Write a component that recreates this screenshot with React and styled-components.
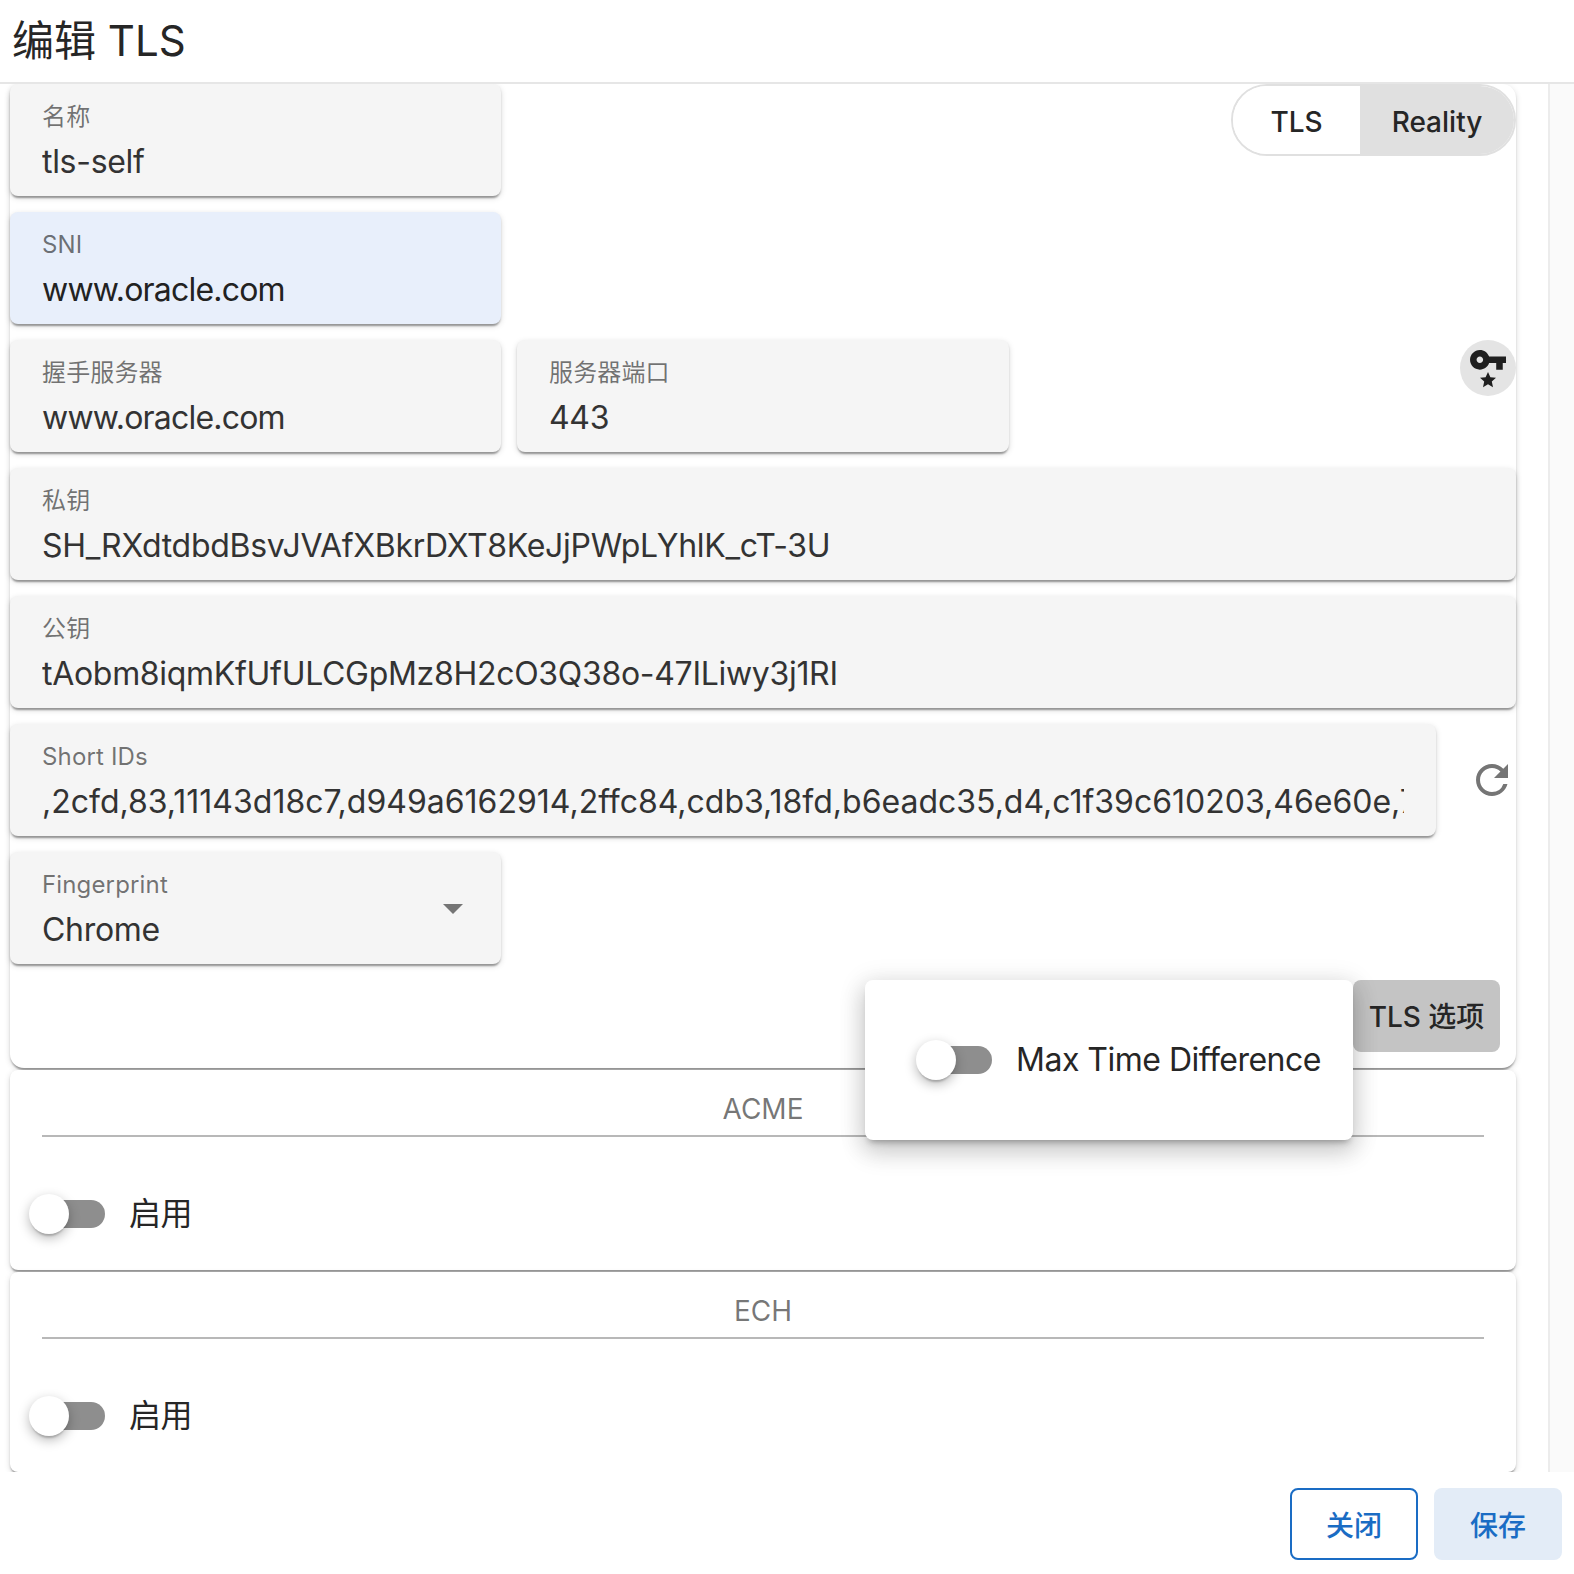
import styled, { createGlobalStyle } from "styled-components";
import { MdArrowDropDown, MdRefresh } from "react-icons/md";

const GlobalStyle = createGlobalStyle`
  html, body {
    margin: 0;
    padding: 0;
    background: #fff;
  }
  body {
    font-family: Inter, "Noto Sans CJK SC", sans-serif;
    color: rgba(0, 0, 0, 0.87);
  }
  * {
    box-sizing: border-box;
  }
`;

const cardShadow =
  "0 4px 2px -2px rgba(0,0,0,.24), 0 2px 2px 0 rgba(0,0,0,.16), 0 2px 6px 0 rgba(0,0,0,.14)";

const Dialog = styled.div`
  display: flex;
  flex-direction: column;
  width: 1574px;
  height: 1574px;
  overflow: hidden;
`;

const Header = styled.header`
  height: 84px;
  flex: none;
  padding: 0 12px 8px;
  display: flex;
  align-items: center;
  border-bottom: 2px solid #e6e6e6;
  font-size: 42px;
  font-weight: 400;
  color: #262626;
`;

const Body = styled.div`
  flex: 1;
  min-height: 0;
  display: flex;
  overflow: hidden;
`;

const Content = styled.div`
  width: 1548px;
  flex: none;
  padding: 0 32px 0 10px;
  display: flex;
  flex-direction: column;
  gap: 2px;
`;

const Scrollbar = styled.div`
  flex: 1;
  background: #fafafa;
  border-left: 2px solid #ececec;
`;

const Paper = styled.section`
  flex: none;
  background: #fff;
  border-radius: ${(p) => p.$radius || 8}px;
  box-shadow: ${cardShadow};
`;

const MainPaper = styled(Paper)`
  display: flex;
  flex-direction: column;
  gap: 16px;
  padding-bottom: 16px;
`;

const Row = styled.div`
  display: flex;
  gap: ${(p) => p.$gap || 16}px;
  align-items: ${(p) => p.$align || "flex-start"};
  justify-content: ${(p) => p.$justify || "flex-start"};
  padding-right: ${(p) => p.$pr || 0}px;
`;

const Field = styled.div`
  position: relative;
  flex: ${(p) => (p.$width ? `0 0 ${p.$width}px` : "1 1 0")};
  min-width: 0;
  height: 112px;
  padding: 18px 32px 0;
  border-radius: 8px;
  background: ${(p) => (p.$autofill ? "#e8effb" : "#f5f5f5")};
  box-shadow: ${cardShadow};
`;

const FieldLabel = styled.div`
  font-size: 24px;
  line-height: 30px;
  letter-spacing: 0.15px;
  color: rgba(0, 0, 0, 0.55);
`;

const FieldValue = styled.div`
  margin-top: 7px;
  font-size: 32px;
  line-height: 46px;
  letter-spacing: ${(p) => p.$spacing}px;
  white-space: nowrap;
  overflow: hidden;
  color: ${(p) => (p.$autofill ? "#222" : "#333")};
`;

const SelectArrow = styled(MdArrowDropDown)`
  position: absolute;
  right: 24px;
  top: 32px;
  font-size: 48px;
  color: #757575;
`;

const ModeToggle = styled.div`
  margin-left: auto;
  display: flex;
  height: 72px;
  border-radius: 36px;
  overflow: hidden;
  border: 2px solid #e0e0e0;
`;

const ModeOption = styled.div`
  display: flex;
  align-items: center;
  justify-content: center;
  width: ${(p) => p.$width}px;
  padding-top: 3px;
  font-size: 28px;
  font-weight: 500;
  color: #262626;
  background: ${(p) => (p.$active ? "#e0e0e0" : "#fff")};
`;

const RoundButton = styled.div`
  margin-left: auto;
  width: 56px;
  height: 56px;
  border-radius: 50%;
  background: #e4e4e4;
`;

const RefreshButton = styled.div`
  flex: none;
  width: 48px;
  height: 48px;
  display: flex;
  align-items: center;
  justify-content: center;
  font-size: 48px;
  color: #757575;
`;

const OptionsAnchor = styled.div`
  position: relative;
`;

const OptionsButton = styled.div`
  width: 147px;
  height: 72px;
  padding-bottom: 2px;
  display: flex;
  align-items: center;
  justify-content: center;
  border-radius: 8px;
  background: #c4c4c4;
  font-size: 28px;
  font-weight: 500;
  color: #262626;
`;

const Popover = styled.div`
  position: absolute;
  z-index: 2;
  right: 100%;
  top: 0;
  width: 488px;
  height: 160px;
  padding-left: 51px;
  display: flex;
  align-items: center;
  background: #fff;
  border-radius: 8px;
  box-shadow: 0 6px 6px -4px rgba(0, 0, 0, 0.3), 0 12px 24px 2px rgba(0, 0, 0, 0.14),
    0 4px 24px 4px rgba(0, 0, 0, 0.1);
`;

const SwitchRow = styled.div`
  display: flex;
  align-items: center;
  gap: 24px;
  font-size: 32px;
  line-height: 40px;
  letter-spacing: -0.5px;
  color: #262626;
`;

const SwitchBox = styled.div`
  position: relative;
  flex: none;
  width: 76px;
  height: 40px;
  padding: 6px 0 6px 8px;
`;

const SwitchTrack = styled.div`
  height: 28px;
  border-radius: 14px;
  background: #8e8e8e;
`;

const SwitchThumb = styled.div`
  position: absolute;
  left: 0;
  top: 0;
  width: 40px;
  height: 40px;
  border-radius: 50%;
  background: #fff;
  box-shadow: 0 4px 2px -2px rgba(0, 0, 0, 0.2), 0 4px 12px rgba(0, 0, 0, 0.28);
`;

const SectionPaper = styled(Paper)`
  height: 200px;
  padding: 20px 32px 0 19px;
`;

const SectionTitle = styled.div`
  margin-left: 13px;
  height: 37px;
  padding-bottom: 8px;
  display: flex;
  align-items: center;
  justify-content: center;
  border-bottom: 2px solid #b8b8b8;
  font-size: 28px;
  color: rgba(0, 0, 0, 0.55);
  box-sizing: content-box;
`;

const SectionRow = styled.div`
  margin-top: 57px;
`;

const Footer = styled.footer`
  flex: none;
  height: 102px;
  padding: 16px 12px 0 0;
  display: flex;
  justify-content: flex-end;
  gap: 16px;
  background: #fff;
`;

const FooterButton = styled.button`
  width: 128px;
  height: 72px;
  border-radius: 8px;
  font-family: inherit;
  font-size: 28px;
  font-weight: 500;
  color: #1a6cc4;
  background: ${(p) => (p.$filled ? "#e3ecf7" : "#fff")};
  border: ${(p) => (p.$filled ? "none" : "2px solid #1a6cc4")};
`;

function KeyStarIcon() {
  return (
    <svg width="56" height="56" viewBox="0 0 56 56" fill="#1f1f1f">
      <g transform="translate(8.4 0.2) scale(1.636)">
        <path d="M12.65 10C11.83 7.67 9.61 6 7 6c-3.31 0-6 2.69-6 6s2.69 6 6 6c2.61 0 4.83-1.67 5.65-4H17v4h4v-4h2v-4H12.65zM7 14c-1.1 0-2-.9-2-2s.9-2 2-2 2 .9 2 2-.9 2-2 2z" />
      </g>
      <path d="M28 32l2.4 5.2 5.6.6-4.2 3.8 1.2 5.6-5-2.9-5 2.9 1.2-5.6-4.2-3.8 5.6-.6z" />
    </svg>
  );
}

function TextField({ label, value, width, autofill, spacing = -0.3, children }) {
  return (
    <Field $width={width} $autofill={autofill}>
      <FieldLabel>{label}</FieldLabel>
      <FieldValue $autofill={autofill} $spacing={spacing}>
        {value}
      </FieldValue>
      {children}
    </Field>
  );
}

function LabeledSwitch({ label }) {
  return (
    <SwitchRow>
      <SwitchBox>
        <SwitchTrack />
        <SwitchThumb />
      </SwitchBox>
      {label}
    </SwitchRow>
  );
}

function Section({ title }) {
  return (
    <SectionPaper>
      <SectionTitle>{title}</SectionTitle>
      <SectionRow>
        <LabeledSwitch label="启用" />
      </SectionRow>
    </SectionPaper>
  );
}

export default function App() {
  return (
    <Dialog>
      <GlobalStyle />
      <Header>编辑 TLS</Header>
      <Body>
        <Content>
          <MainPaper $radius={14}>
            <Row>
              <TextField label="名称" value="tls-self" width={491} />
              <ModeToggle>
                <ModeOption $width={127}>TLS</ModeOption>
                <ModeOption $width={154} $active>
                  Reality
                </ModeOption>
              </ModeToggle>
            </Row>
            <Row>
              <TextField label="SNI" value="www.oracle.com" width={491} spacing={-0.8} autofill />
            </Row>
            <Row>
              <TextField label="握手服务器" value="www.oracle.com" width={491} spacing={-0.8} />
              <TextField label="服务器端口" value="443" width={492} />
              <RoundButton>
                <KeyStarIcon />
              </RoundButton>
            </Row>
            <Row>
              <TextField
                label="私钥"
                value="SH_RXdtdbdBsvJVAfXBkrDXT8KeJjPWpLYhlK_cT-3U"
              />
            </Row>
            <Row>
              <TextField
                label="公钥"
                value="tAobm8iqmKfUfULCGpMz8H2cO3Q38o-47ILiwy3j1RI"
              />
            </Row>
            <Row $gap={32} $align="center">
              <TextField
                label="Short IDs"
                value=",2cfd,83,11143d18c7,d949a6162914,2ffc84,cdb3,18fd,b6eadc35,d4,c1f39c610203,46e60e,7a"
                spacing={0}
              />
              <RefreshButton>
                <MdRefresh />
              </RefreshButton>
            </Row>
            <Row>
              <TextField label="Fingerprint" value="Chrome" width={491}>
                <SelectArrow />
              </TextField>
            </Row>
            <Row $justify="flex-end" $pr={16}>
              <OptionsAnchor>
                <Popover>
                  <LabeledSwitch label="Max Time Difference" />
                </Popover>
                <OptionsButton>TLS 选项</OptionsButton>
              </OptionsAnchor>
            </Row>
          </MainPaper>
          <Section title="ACME" />
          <Section title="ECH" />
        </Content>
        <Scrollbar />
      </Body>
      <Footer>
        <FooterButton>关闭</FooterButton>
        <FooterButton $filled>保存</FooterButton>
      </Footer>
    </Dialog>
  );
}
